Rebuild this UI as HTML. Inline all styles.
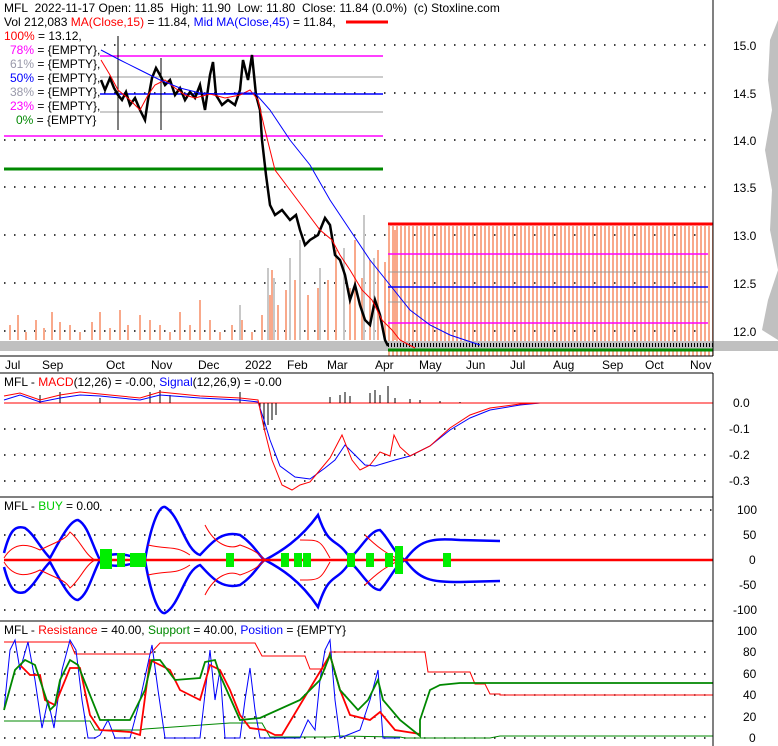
<!DOCTYPE html>
<html><head><style>
body{margin:0;background:#fff;width:778px;height:746px;overflow:hidden}
svg{display:block;font-family:"Liberation Sans",sans-serif;font-size:12px}
</style></head><body>
<svg width="778" height="746" viewBox="0 0 778 746">
<defs>
<pattern id="vb" width="4" height="10" patternUnits="userSpaceOnUse"><rect x="0" y="0" width="2" height="10" fill="#f9a98b"/></pattern>
</defs>
<g stroke="#000" stroke-width="1.5" stroke-dasharray="1.5,8.5">
<line x1="4" y1="45" x2="713" y2="45"/><line x1="4" y1="93" x2="713" y2="93"/><line x1="4" y1="140" x2="713" y2="140"/><line x1="4" y1="187" x2="713" y2="187"/><line x1="4" y1="235" x2="713" y2="235"/><line x1="4" y1="283" x2="713" y2="283"/><line x1="4" y1="331" x2="713" y2="331"/>
</g>
<g stroke="#f9a98b" stroke-width="2">
<path d="M10 340V325M18 340V315M26 340V332M36 340V320M44 340V328M52 340V312M60 340V322M70 340V325M80 340V332M92 340V322M100 340V312M110 340V328M120 340V310M128 340V325M140 340V315M150 340V320M160 340V325M170 340V332M180 340V312M190 340V325M200 340V300M210 340V320M220 340V332M232 340V325M242 340V320M252 340V332M262 340V315M270 340V295M272 340V270M278 340V305M286 340V290M295 340V280M300 340V305M308 340V295M318 340V288M328 340V280M336 340V250M350 340V288M355 340V240M362 340V278M370 340V260M378 340V250M385 340V262M395 340V230"/>
</g>
<g stroke="#c8c8c8" stroke-width="2">
<path d="M240 340V305M268 340V268M274 340V278M290 340V258M300 340V240M320 340V268M344 340V248M364 340V215M374 340V258"/>
</g>
<rect x="388" y="226" width="325" height="130" fill="url(#vb)"/>
<rect x="0" y="341" width="778" height="10" fill="#c0c0c0"/>
<path d="M778 20 L770 40 L768 80 L772 110 L765 150 L772 190 L770 230 L778 270 L768 300 L762 330 L778 340 Z" fill="#c0c0c0"/>
<line x1="100" y1="56" x2="383" y2="56" stroke="#f0f" stroke-width="1.5"/>
<line x1="100" y1="77" x2="383" y2="77" stroke="#999"/>
<line x1="100" y1="94" x2="383" y2="94" stroke="#00f" stroke-width="1.5"/>
<line x1="100" y1="112" x2="383" y2="112" stroke="#999"/>
<line x1="4" y1="136" x2="383" y2="136" stroke="#f0f" stroke-width="1.5"/>
<line x1="4" y1="169" x2="383" y2="169" stroke="#080" stroke-width="3"/>
<line x1="388" y1="224" x2="713" y2="224" stroke="#f00" stroke-width="3"/>
<line x1="388" y1="254" x2="708" y2="254" stroke="#f0f" stroke-width="1.5"/>
<line x1="388" y1="272" x2="708" y2="272" stroke="#999"/>
<line x1="388" y1="287" x2="708" y2="287" stroke="#00f" stroke-width="1.5"/>
<line x1="388" y1="302" x2="708" y2="302" stroke="#999"/>
<line x1="388" y1="323" x2="708" y2="323" stroke="#f0f" stroke-width="1.5"/>
<line x1="388" y1="350" x2="713" y2="350" stroke="#080" stroke-width="3"/>
<line x1="388" y1="345" x2="713" y2="345" stroke="#000" stroke-width="4" stroke-dasharray="1,2"/>
<polyline fill="none" stroke="#000" stroke-width="2.5" points="101,80 105,90 110,78 114,88 118,95 122,100 126,92 130,105 135,98 140,110 145,120 148,100 152,78 156,68 160,75 165,85 170,80 175,95 180,88 185,100 190,92 195,98 200,85 205,110 210,75 213,62 216,95 222,105 228,100 235,105 240,90 243,60 248,80 252,55 256,95 260,110 262,140 266,175 270,205 275,215 282,210 290,220 296,215 300,230 305,245 310,240 318,235 325,218 330,225 335,255 340,260 345,275 350,300 355,285 360,305 365,320 370,325 375,300 380,315 385,340 388,346"/>
<line x1="118" y1="36" x2="118" y2="130" stroke="#000"/>
<line x1="161" y1="58" x2="161" y2="130" stroke="#000"/>
<polyline fill="none" stroke="#f00" points="101,60 110,75 118,90 130,100 140,110 148,95 155,85 165,80 175,88 185,95 195,98 210,94 225,98 240,95 250,90 258,100 265,130 275,170 290,190 305,210 320,230 332,240 340,255 350,270 362,290 372,300 382,320 392,330 400,340 415,348"/>
<polyline fill="none" stroke="#00f" points="101,50 120,60 140,70 160,80 180,88 200,93 220,94 240,93 255,93 270,110 290,140 310,165 330,200 350,230 370,260 390,285 410,310 430,325 450,335 480,345"/>
<line x1="713" y1="0" x2="713" y2="356" stroke="#000"/>
<line x1="0" y1="356" x2="713" y2="356" stroke="#000"/>
<g font-size="12" fill="#000">
<text x="733" y="50">15.0</text><text x="733" y="98">14.5</text><text x="733" y="145">14.0</text><text x="733" y="192">13.5</text><text x="733" y="240">13.0</text><text x="733" y="288">12.5</text><text x="733" y="336">12.0</text>
<text x="5" y="369">Jul</text><text x="42" y="369">Sep</text><text x="106" y="369">Oct</text><text x="151" y="369">Nov</text><text x="198" y="369">Dec</text><text x="245" y="369">2022</text><text x="287" y="369">Feb</text><text x="327" y="369">Mar</text><text x="375" y="369">Apr</text><text x="419" y="369">May</text><text x="466" y="369">Jun</text><text x="510" y="369">Jul</text><text x="553" y="369">Aug</text><text x="602" y="369">Sep</text><text x="645" y="369">Oct</text><text x="690" y="369">Nov</text>
</g>
<line x1="0" y1="373" x2="713" y2="373" stroke="#000"/>
<rect x="0" y="29" width="98" height="98" fill="#fff"/>
<text x="4" y="12">MFL&#160;&#160;2022-11-17 Open: 11.85&#160;&#160;High: 11.90&#160;&#160;Low: 11.80&#160;&#160;Close: 11.84 (0.0%)&#160;&#160;(c) Stoxline.com</text>
<text x="4" y="26">Vol 212,083 <tspan fill="#f00">MA(Close,15)</tspan> = 11.84, <tspan fill="#00f">Mid MA(Close,45)</tspan> = 11.84,</text>
<line x1="346" y1="22" x2="388" y2="22" stroke="#f00" stroke-width="3"/>
<text x="4" y="40"><tspan fill="#f00">100%</tspan> = 13.12,</text>
<text x="10" y="54"><tspan fill="#f0f">78%</tspan> = {EMPTY},</text>
<text x="10" y="68"><tspan fill="#99a">61%</tspan> = {EMPTY},</text>
<text x="10" y="82"><tspan fill="#00f">50%</tspan> = {EMPTY},</text>
<text x="10" y="96"><tspan fill="#99a">38%</tspan> = {EMPTY},</text>
<text x="10" y="110"><tspan fill="#f0f">23%</tspan> = {EMPTY},</text>
<text x="16" y="124"><tspan fill="#080">0%</tspan> = {EMPTY}</text>

<g stroke="#000" stroke-width="1.5" stroke-dasharray="1.5,8.5">
<line x1="4" y1="429" x2="713" y2="429"/><line x1="4" y1="455" x2="713" y2="455"/><line x1="4" y1="481" x2="713" y2="481"/>
</g>
<line x1="4" y1="403" x2="713" y2="403" stroke="#f00"/>
<text x="4" y="386">MFL - <tspan fill="#f00">MACD</tspan>(12,26) = -0.00, <tspan fill="#00f">Signal</tspan>(12,26,9) = -0.00</text>
<path d="M40 403V395M60 403V392M100 403V398M150 403V392M160 403V390M170 403V395M240 403V392M260 403V410M264 403V430M268 403V425M272 403V420M276 403V415M330 403V397M340 403V395M345 403V392M350 403V396M370 403V393M375 403V390M380 403V395M388 403V386M395 403V398M410 403V399M420 403V400M440 403V401M460 403V402" stroke="#000"/>
<polyline fill="none" stroke="#00f" points="4,400 20,395 40,402 60,398 80,395 100,396 120,398 140,400 160,395 200,398 240,400 258,402 264,420 270,440 280,466 295,477 310,479 325,468 335,460 345,445 355,455 365,465 375,466 385,463 395,460 410,456 430,446 450,430 470,418 490,410 520,405 540,403"/>
<polyline fill="none" stroke="#f00" points="4,396 20,393 40,400 60,395 80,392 100,394 120,396 140,398 160,392 200,396 240,398 258,400 264,428 272,460 282,485 292,490 300,485 310,482 320,470 330,458 342,435 352,460 360,470 370,465 380,452 390,456 394,435 400,447 410,456 430,446 450,428 470,415 490,408 520,404 540,403"/>
<g font-size="12"><text x="733" y="407">0.0</text><text x="729" y="433">-0.1</text><text x="729" y="459">-0.2</text><text x="729" y="485">-0.3</text></g>
<line x1="0" y1="497" x2="713" y2="497" stroke="#000"/>

<g stroke="#000" stroke-width="1.5" stroke-dasharray="1.5,8.5">
<line x1="100" y1="510" x2="713" y2="510"/><line x1="4" y1="535" x2="713" y2="535"/><line x1="4" y1="560" x2="713" y2="560"/><line x1="4" y1="585" x2="713" y2="585"/><line x1="4" y1="610" x2="713" y2="610"/>
</g>
<text x="4" y="510">MFL - <tspan fill="#0c0">BUY</tspan> = 0.00</text>
<g fill="none" stroke="#00f" stroke-width="2.5">
<path d="M4 553C10 530 15 525 25 528 C35 535 40 548 50 558 C60 540 70 520 78 520 C88 525 92 545 100 560 C110 570 130 565 145 560 C150 530 158 505 165 507 C180 515 185 550 200 555 C210 545 220 530 240 535 C255 545 260 558 265 560 C280 552 300 540 318 515 C330 550 335 535 350 558 C360 550 370 530 380 530 C390 540 395 555 405 560 C420 540 430 538 460 540 L500 541"/>
<path d="M4 567C10 590 15 595 25 592 C35 585 40 572 50 562 C60 580 70 600 78 600 C88 595 92 575 100 560 C110 550 130 555 145 560 C150 590 158 615 165 613 C180 605 185 570 200 565 C210 575 220 590 240 585 C255 575 260 562 265 560 C280 568 300 580 318 607 C330 570 335 585 350 562 C360 570 370 590 380 590 C390 580 395 565 405 560 C420 580 430 582 460 582 L500 581"/>
</g>
<line x1="4" y1="560" x2="713" y2="560" stroke="#f00" stroke-width="2.5"/>
<g fill="none" stroke="#f00" stroke-width="1">
<path d="M4 558C15 540 30 545 40 550 C60 540 65 540 70 532 C80 540 85 555 95 560 M148 545 C170 550 175 545 190 555 M205 525 C215 545 230 550 240 545 C255 550 260 555 265 560 M300 540 C320 540 320 540 330 558 M365 535 C380 550 390 555 400 560"/>
<path d="M4 562C15 580 30 575 40 570 C60 580 65 580 70 588 C80 580 85 565 95 560 M148 575 C170 570 175 575 190 565 M205 595 C215 575 230 570 240 575 C255 570 260 565 265 560 M300 580 C320 580 320 580 330 562 M365 585 C380 570 390 565 400 560"/>
</g>
<g fill="#0e0">
<rect x="100" y="549" width="12" height="20"/><rect x="117" y="553" width="8" height="14"/><rect x="130" y="553" width="16" height="14"/><rect x="226" y="553" width="8" height="14"/><rect x="281" y="553" width="8" height="14"/><rect x="294" y="553" width="8" height="14"/><rect x="303" y="553" width="8" height="14"/><rect x="347" y="553" width="8" height="14"/><rect x="366" y="553" width="8" height="14"/><rect x="385" y="553" width="8" height="14"/><rect x="395" y="546" width="8" height="28"/><rect x="443" y="553" width="8" height="14"/>
</g>
<g font-size="12"><text x="737" y="514">100</text><text x="743" y="539">50</text><text x="749" y="564">0</text><text x="739" y="589">-50</text><text x="733" y="614">-100</text></g>
<line x1="0" y1="621" x2="713" y2="621" stroke="#000"/>

<g stroke="#000" stroke-width="1.5" stroke-dasharray="1.5,8.5">
<line x1="4" y1="652" x2="713" y2="652"/><line x1="4" y1="674" x2="713" y2="674"/><line x1="4" y1="695" x2="713" y2="695"/><line x1="4" y1="717" x2="713" y2="717"/><line x1="4" y1="738" x2="713" y2="738"/>
</g>
<text x="4" y="634">MFL - <tspan fill="#f00">Resistance</tspan> = 40.00, <tspan fill="#080">Support</tspan> = 40.00, <tspan fill="#00f">Position</tspan> = {EMPTY}</text>
<polyline fill="none" stroke="#f00" points="4,642 70,642 75,654 150,654 160,643 255,643 262,656 305,656 310,669 325,669 330,652 425,652 428,672 470,672 475,684 485,684 490,694 500,694 500,695 713,695"/>
<polyline fill="none" stroke="#080" points="4,721 90,721 95,730 140,730 145,729 230,723 262,723 270,737 330,737 340,736 400,737 405,738 490,738 500,736 713,736"/>
<polyline fill="none" stroke="#00f" points="4,710 10,650 15,640 20,670 28,642 35,680 42,728 48,700 54,728 62,670 70,640 76,650 82,700 88,738 95,738 100,735 108,720 115,738 130,738 140,700 152,645 158,690 165,738 200,738 210,650 215,700 220,670 225,738 240,738 245,700 250,668 255,710 260,738 300,738 308,720 315,730 320,680 325,650 330,640 335,700 340,738 360,730 370,700 378,670 383,738 400,738"/>
<polyline fill="none" stroke="#f00" stroke-width="1.8" points="20,665 30,675 40,675 45,700 55,705 70,668 80,668 90,715 100,730 130,732 140,735 150,660 160,665 170,670 180,690 200,700 210,665 220,670 230,690 240,715 250,728 265,730 275,735 282,735 330,655 340,690 350,715 370,720 380,712 395,730 420,734"/>
<polyline fill="none" stroke="#080" stroke-width="1.8" points="4,710 15,670 25,660 35,665 50,710 55,705 60,680 70,660 78,665 100,720 130,720 145,690 152,660 160,660 175,680 200,678 205,662 215,660 220,675 240,720 260,718 300,700 320,680 330,655 340,690 358,710 368,700 378,680 383,700 400,720 420,736 420,720 430,690 440,685 460,683 500,683 713,683"/>
<g font-size="12"><text x="737" y="635">100</text><text x="743" y="656">80</text><text x="743" y="678">60</text><text x="743" y="699">40</text><text x="743" y="721">20</text><text x="749" y="742">0</text></g>
<line x1="713" y1="373" x2="713" y2="746" stroke="#000"/>
</svg>
</body></html>
